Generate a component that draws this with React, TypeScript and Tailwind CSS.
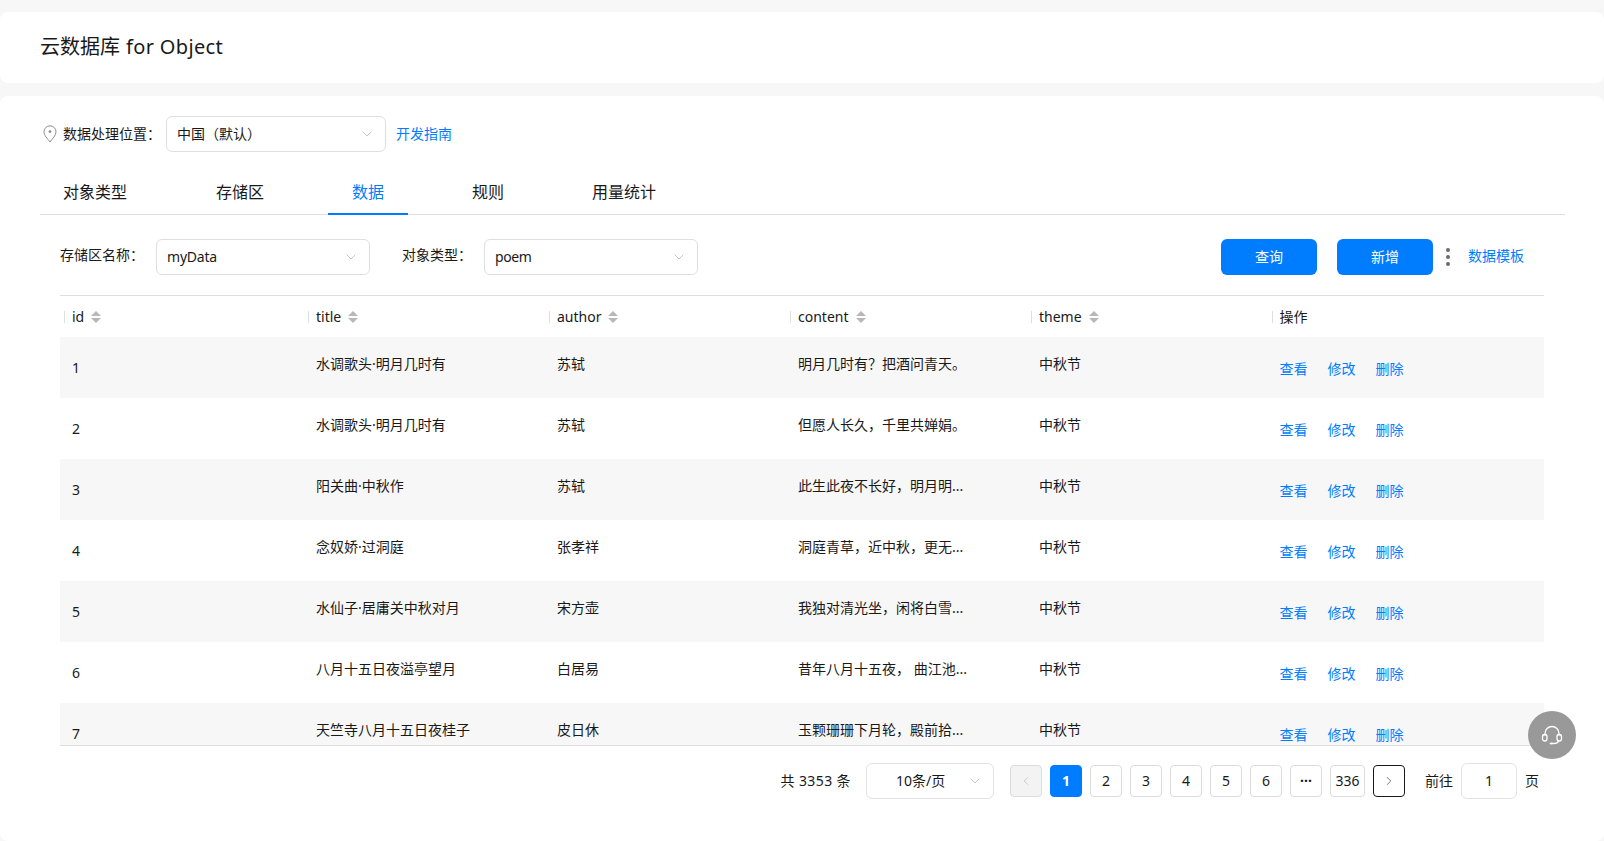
import { ChevronDown, ChevronLeft, ChevronRight } from "lucide-react"

const rows = [
  { id: 1, title: "水调歌头·明月几时有", author: "苏轼", content: "明月几时有？把酒问青天。" },
  { id: 2, title: "水调歌头·明月几时有", author: "苏轼", content: "但愿人长久，千里共婵娟。" },
  { id: 3, title: "阳关曲·中秋作", author: "苏轼", content: "此生此夜不长好，明月明..." },
  { id: 4, title: "念奴娇·过洞庭", author: "张孝祥", content: "洞庭青草，近中秋，更无..." },
  { id: 5, title: "水仙子·居庸关中秋对月", author: "宋方壶", content: "我独对清光坐，闲将白雪..." },
  { id: 6, title: "八月十五日夜溢亭望月", author: "白居易", content: "昔年八月十五夜， 曲江池..." },
  { id: 7, title: "天竺寺八月十五日夜桂子", author: "皮日休", content: "玉颗珊珊下月轮，殿前拾..." },
]

const columns = ["id", "title", "author", "content", "theme"]
const tabs = [
  { label: "对象类型", width: "w-[153px]" },
  { label: "存储区", width: "w-[112px]" },
  { label: "数据", width: "w-[80px]", active: true },
  { label: "规则", width: "w-[120px] ml-[64px]" },
  { label: "用量统计", width: "w-[128px]" },
]

function SortIcon() {
  return (
    <svg width="10" height="14" viewBox="0 0 10 14" className="ml-[7px] mt-px">
      <path d="M5 1 L10 6 H0 Z" fill="#b8b8b8" />
      <path d="M5 13 L10 8 H0 Z" fill="#b8b8b8" />
    </svg>
  )
}

function PinIcon() {
  return (
    <svg width="14" height="18" viewBox="0 0 14 18" fill="none" stroke="#8c8c8c" strokeWidth="1" className="ml-[3px]">
      <path d="M7 17 C4.5 13.5 1 10.5 1 6.8 A6 6 0 0 1 13 6.8 C13 10.5 9.5 13.5 7 17 Z" />
      <circle cx="7" cy="6.6" r="1.4" fill="#8c8c8c" stroke="none" />
    </svg>
  )
}

function HeadsetIcon() {
  return (
    <svg width="24" height="24" viewBox="0 0 24 24" fill="none" stroke="white" strokeWidth="1.3" strokeLinecap="round">
      <path d="M5 12 V10.5 A7 7 0 0 1 19 10.5 V12" />
      <rect x="2.5" y="11.5" width="4.5" height="6.5" rx="2.2" />
      <rect x="17" y="11.5" width="4.5" height="6.5" rx="2.2" />
      <path d="M18.5 18 C18 20 16 20.5 13.5 20.5" />
      <ellipse cx="11.5" cy="20.5" rx="2" ry="1" fill="white" stroke="none" />
    </svg>
  )
}

function Select({ value, className }: { value: string; className: string }) {
  return (
    <div className={`flex h-9 items-center justify-between rounded-[6px] border border-[#dfdfdf] bg-white pl-2.5 pr-2.5 text-sm text-[#191919] ${className}`}>
      <span>{value}</span>
      <ChevronDown size={16} strokeWidth={1} className="text-[#aaa]" />
    </div>
  )
}

function PageButton({ children, active, w = "w-8" }: { children: React.ReactNode; active?: boolean; w?: string }) {
  return (
    <div
      className={`flex h-8 items-center justify-center rounded-[4px] border text-sm ${w} ${
        active ? "border-[#007dff] bg-[#007dff] font-bold text-white" : "border-[#dcdcdc] bg-white text-[#191919]"
      }`}
    >
      {children}
    </div>
  )
}

export default function App() {
  return (
    <div className="relative h-[841px] w-[1604px] overflow-hidden bg-[#f7f7f7] pt-3 font-['Noto_Sans','Noto_Sans_CJK_SC',sans-serif] text-[#191919]">
      {/* Header */}
      <div className="flex h-[71px] items-center rounded-[8px] bg-white pb-0.5 pl-10 text-[20px]">
        云数据库 <span className="ml-[6px] tracking-[0.35px]">for Object</span>
      </div>

      <div className="mt-[13px] h-[745px] rounded-[8px] bg-white pl-10 pt-5">
        {/* Location */}
        <div className="flex h-9 items-center text-sm">
          <PinIcon />
          <span className="ml-[6px] w-[103px] whitespace-nowrap">数据处理位置：</span>
          <Select value="中国（默认）" className="w-[220px]" />
          <span className="ml-2.5 text-[#007dff]">开发指南</span>
        </div>

        {/* Tabs */}
        <div className="mt-[19px] flex h-[44px] w-[1525px] border-b border-[#dedede] pl-[23px] text-base">
          {tabs.map((tab) => (
            <div
              key={tab.label}
              className={`h-[44px] whitespace-nowrap pt-[9px] ${tab.width} ${
                tab.active ? "border-b-2 border-[#007dff] text-center text-[#007dff]" : ""
              }`}
            >
              {tab.label}
            </div>
          ))}
        </div>

        <div className="ml-5 w-[1484px]">
          {/* Filters */}
          <div className="flex h-[81px] items-start border-b border-[#dedede] pt-6 text-sm">
            <span className="w-[96px] whitespace-nowrap pt-[6px]">存储区名称：</span>
            <Select value="myData" className="w-[214px] tracking-[-0.2px]" />
            <span className="ml-8 w-[82px] whitespace-nowrap pt-[6px]">对象类型：</span>
            <Select value="poem" className="w-[214px] tracking-[-0.4px]" />
            <button className="ml-auto h-9 w-24 rounded-[6px] bg-[#007dff] text-white">查询</button>
            <button className="ml-5 h-9 w-24 rounded-[6px] bg-[#007dff] text-white">新增</button>
            <div className="ml-[13px] mt-[9px] flex flex-col gap-[3px]">
              <span className="size-1 rounded-full bg-[#6b6b6b]" />
              <span className="size-1 rounded-full bg-[#6b6b6b]" />
              <span className="size-1 rounded-full bg-[#6b6b6b]" />
            </div>
            <span className="ml-[18px] mr-5 pt-[7px] text-[#007dff]">数据模板</span>
          </div>

          {/* Table */}
          <div className="h-[450px] overflow-hidden border-b border-[#dedede] text-sm">
            <div className="grid h-[41px] grid-cols-[248px_241px_241px_241px_240.5px_1fr] items-center">
              {columns.map((col) => (
                <div key={col} className={`flex items-center ${col === "id" ? "pl-[4px]" : ""}`}>
                  <span className="mr-[7px] h-3 border-l border-[#dedede]" />
                  {col}
                  <SortIcon />
                </div>
              ))}
              <div className="flex items-center">
                <span className="mr-[7px] h-3 border-l border-[#dedede]" />
                操作
              </div>
            </div>
            {rows.map((row, i) => (
              <div
                key={row.id}
                className={`grid h-[61px] grid-cols-[248px_241px_241px_241px_240.5px_1fr] items-center ${
                  i % 2 === 0 ? "bg-[#f7f7f7]" : "bg-white"
                }`}
              >
                <span className="pl-[12px]">{row.id}</span>
                <span className="pb-[7px] pl-[8px]">{row.title}</span>
                <span className="pb-[7px] pl-[8px]">{row.author}</span>
                <span className="pb-[7px] pl-[8px]">{row.content}</span>
                <span className="pb-[7px] pl-[8px]">中秋节</span>
                <span className="flex gap-5 pl-[8px] pt-[2px] text-[#007dff]">
                  <span>查看</span>
                  <span>修改</span>
                  <span>删除</span>
                </span>
              </div>
            ))}
          </div>

          {/* Pagination */}
          <div className="flex h-[53px] items-center justify-end pr-[5px] pt-[17px] text-sm">
            <span className="mr-[15px] tracking-[0.4px]">共 3353 条</span>
            <div className="mr-4 flex h-9 w-[128px] items-center justify-between rounded-[6px] border border-[#e3e3e3] pl-[29px] pr-2.5">
              <span>10条/页</span>
              <ChevronDown size={16} strokeWidth={1} className="text-[#aaa]" />
            </div>
            <div className="flex items-center gap-2">
              <div className="flex size-8 items-center justify-center rounded-[4px] border border-[#dcdcdc] bg-[#f3f3f3] text-[#aaa]">
                <ChevronLeft size={14} strokeWidth={1} />
              </div>
              <PageButton active>1</PageButton>
              <PageButton>2</PageButton>
              <PageButton>3</PageButton>
              <PageButton>4</PageButton>
              <PageButton>5</PageButton>
              <PageButton>6</PageButton>
              <PageButton>
                <span className="font-bold">···</span>
              </PageButton>
              <PageButton w="w-[35px]">336</PageButton>
              <div className="flex size-8 items-center justify-center rounded-[4px] border border-[#191919] bg-white">
                <ChevronRight size={14} strokeWidth={1} />
              </div>
            </div>
            <span className="ml-5">前往</span>
            <div className="ml-2 flex h-9 w-14 items-center justify-center rounded-[6px] border border-[#e3e3e3]">1</div>
            <span className="ml-2">页</span>
          </div>
        </div>
      </div>

      {/* Floating help button */}
      <div className="absolute left-[1528px] top-[711px] flex size-12 items-center justify-center rounded-full bg-[#999] text-white">
        <HeadsetIcon />
      </div>
    </div>
  )
}
